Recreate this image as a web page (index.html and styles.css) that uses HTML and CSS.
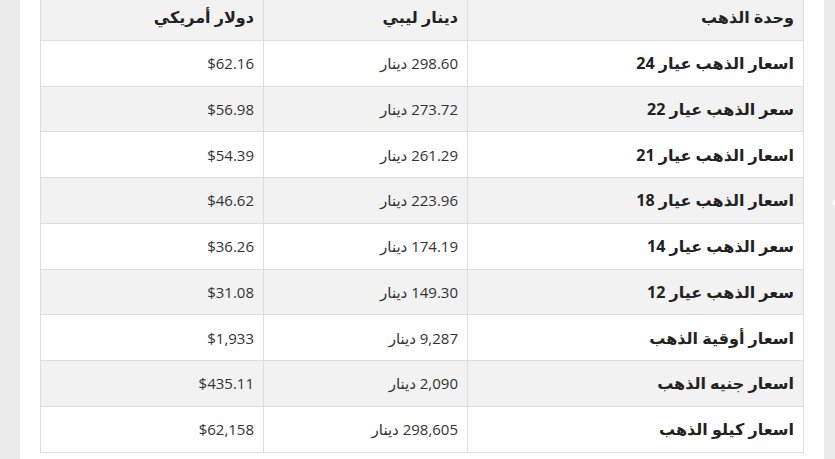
FILE: index.html
```html
<!DOCTYPE html>
<html lang="ar" dir="rtl">
<head>
<meta charset="utf-8">
<link rel="stylesheet" href="styles.css">
</head>
<body>
<div class="page">
  <div class="content">
    <table class="prices">
      <thead>
        <tr><th class="c1">وحدة الذهب</th><th class="c2">دينار ليبي</th><th class="c3">دولار أمريكي</th></tr>
      </thead>
      <tbody>
        <tr><td class="c1">اسعار الذهب عيار 24</td><td class="c2">298.60 دينار</td><td class="c3">$62.16</td></tr>
        <tr><td class="c1">سعر الذهب عيار 22</td><td class="c2">273.72 دينار</td><td class="c3">$56.98</td></tr>
        <tr><td class="c1">اسعار الذهب عيار 21</td><td class="c2">261.29 دينار</td><td class="c3">$54.39</td></tr>
        <tr><td class="c1">اسعار الذهب عيار 18</td><td class="c2">223.96 دينار</td><td class="c3">$46.62</td></tr>
        <tr><td class="c1">سعر الذهب عيار 14</td><td class="c2">174.19 دينار</td><td class="c3">$36.26</td></tr>
        <tr><td class="c1">سعر الذهب عيار 12</td><td class="c2">149.30 دينار</td><td class="c3">$31.08</td></tr>
        <tr><td class="c1">اسعار أوقية الذهب</td><td class="c2">9,287 دينار</td><td class="c3">$1,933</td></tr>
        <tr><td class="c1">اسعار جنيه الذهب</td><td class="c2">2,090 دينار</td><td class="c3">$435.11</td></tr>
        <tr><td class="c1">اسعار كيلو الذهب</td><td class="c2">298,605 دينار</td><td class="c3">$62,158</td></tr>
      </tbody>
    </table>
  </div>
  <span class="tick"></span>
</div>
</body>
</html>
```
FILE: styles.css
```css
html, body {
  margin: 0;
  padding: 0;
  background: #ebebeb;
  height: 100%;
  overflow: hidden;
}
.page {
  position: relative;
  display: flex;
  flex-direction: row-reverse;
  padding-left: 20px;
  padding-right: 11px;
  height: 459px;
}
.content {
  background: #fff;
  width: 764px;
  padding: 0 20px;
  margin-top: -6px;
  height: 480px;
}
.prices {
  width: 764px;
  border-collapse: collapse;
  font-family: "Open Sans", "DejaVu Sans", sans-serif;
  font-size: 15px;
  color: #333;
  direction: rtl;
}
.prices th, .prices td {
  border: 1px solid #dddddd;
  text-align: right;
  padding: 0 9px;
  height: 45.75px;
  box-sizing: border-box;
}
.prices th {
  background: #f2f2f2;
  font-weight: bold;
  color: #222;
  font-size: 16px;
}
.prices tbody tr:nth-child(even) td {
  background: #f2f2f2;
}
.prices td.c1 {
  font-weight: bold;
  color: #222;
  font-size: 16px;
}
.c1 { width: 336px; }
.c2 { width: 204px; }
.c3 { width: 223px; }
.tick {
  position: absolute;
  right: 0;
  top: 200px;
  width: 2px;
  height: 5px;
  background: #fff;
}
```
